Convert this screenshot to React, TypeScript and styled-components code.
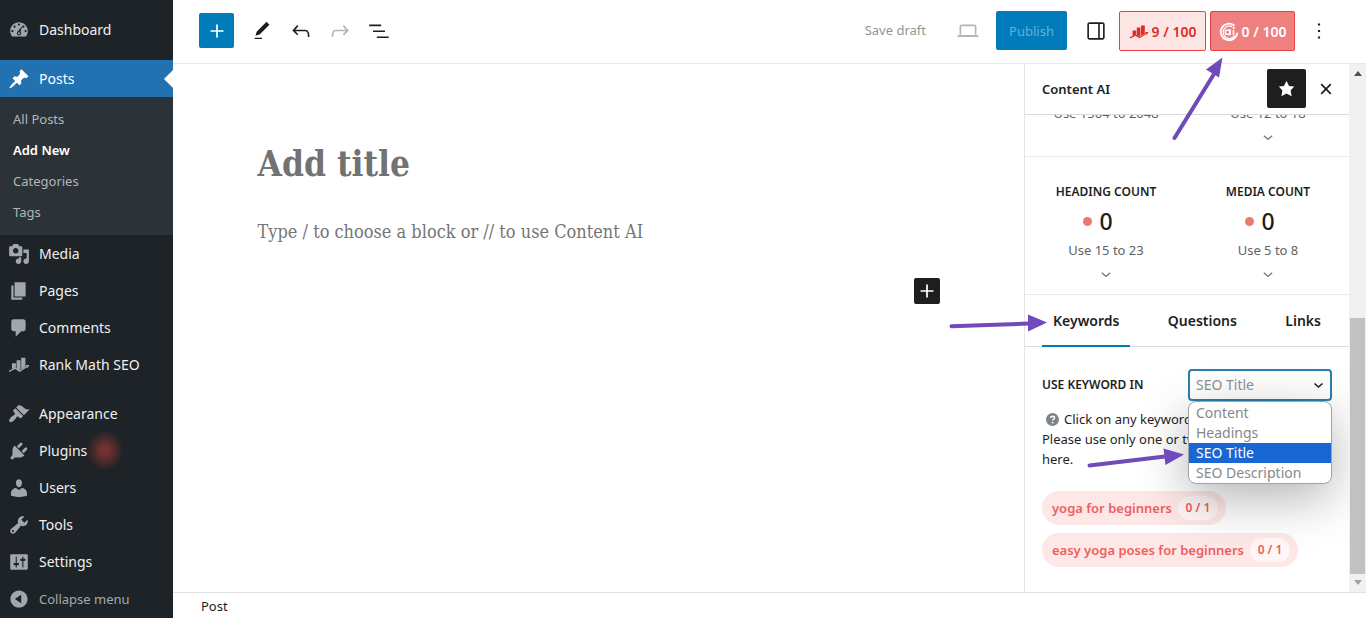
import React, { useState } from 'react';
import styled, { createGlobalStyle, css } from 'styled-components';

const sans = `'Noto Sans', 'Open Sans', sans-serif`;
const serif = `'DejaVu Serif Condensed', 'DejaVu Serif', serif`;
const blue = '#007cba';
const purple = '#7049ba';

const GlobalStyle = createGlobalStyle`
  *, *::before, *::after { box-sizing: border-box; }
  body { margin: 0; background: #fff; color: #1e1e1e; font: 14px/20px ${sans}; }
  button, select, input { font: inherit; color: inherit; }
  button { padding: 0; border: 0; background: none; cursor: pointer; }
  ul { margin: 0; padding: 0; list-style: none; }
  h1, h2, p { margin: 0; }
  a { color: inherit; text-decoration: none; }
`;

const Shell = styled.div`
  position: relative;
  display: flex;
  height: 100vh;
  min-height: 618px;
  overflow: hidden;
`;

/* ---------- admin menu ---------- */

const AdminMenu = styled.nav`
  flex: 0 0 173px;
  padding-top: 11px;
  background: #1d2327;
  color: #f0f0f1;
`;

const MenuLink = styled.a<{ $current?: boolean; $muted?: boolean }>`
  position: relative;
  display: flex;
  align-items: center;
  gap: 9px;
  height: 37px;
  padding-left: 8px;
  color: ${(p) => (p.$muted ? '#a7aaad' : 'inherit')};
  font-size: ${(p) => (p.$muted ? 13 : 14)}px;
  ${(p) =>
    p.$current &&
    css`
      background: #2271b1;
      color: #fff;
      &::after {
        content: '';
        position: absolute;
        right: 0;
        border: 9px solid transparent;
        border-left: 0;
        border-right-color: #fff;
      }
    `}
`;

const MenuIcon = styled.svg<{ $current?: boolean }>`
  width: 22px;
  height: 22px;
  fill: ${(p) => (p.$current ? '#fff' : '#a2a7ad')};
`;

const MenuSpacer = styled.li`
  height: 12px;
`;

const SubMenu = styled.ul`
  padding: 7px 0;
  background: #2c3338;
`;

const SubLink = styled.a<{ $current?: boolean }>`
  display: block;
  padding-left: 13px;
  font-size: 13px;
  line-height: 31px;
  color: ${(p) => (p.$current ? '#fff' : '#b2b5b8')};
  font-weight: ${(p) => (p.$current ? 600 : 400)};
`;

const UpdateGlow = styled.span`
  width: 34px;
  height: 37px;
  margin-left: -8px;
  background: radial-gradient(closest-side, #74312f 20%, #1d2327 110%);
`;

/* ---------- editor frame ---------- */

const Editor = styled.div`
  display: flex;
  flex: 1;
  flex-direction: column;
  min-width: 0;
`;

const TopBar = styled.header`
  display: flex;
  align-items: center;
  justify-content: space-between;
  flex: 0 0 64px;
  padding: 0 28px 2px 26px;
  border-bottom: 1px solid #e8e8e8;
`;

const ToolGroup = styled.div<{ $gap: number }>`
  display: flex;
  align-items: center;
  gap: ${(p) => p.$gap}px;
`;

const ToolButton = styled.button`
  display: grid;
  place-items: center;
  width: 39px;
  height: 39px;
  &:disabled { color: #b5b5b5; }
`;

const Glyph = styled.svg<{ $size?: number }>`
  width: ${(p) => p.$size ?? 26}px;
  height: ${(p) => p.$size ?? 26}px;
  fill: currentColor;
`;

const Inserter = styled.button<{ $dark?: boolean }>`
  display: grid;
  place-items: center;
  width: ${(p) => (p.$dark ? 26 : 35)}px;
  height: ${(p) => (p.$dark ? 26 : 35)}px;
  border-radius: 2px;
  background: ${(p) => (p.$dark ? '#1e1e1e' : blue)};
  color: #fff;
`;

const DraftButton = styled.button`
  padding: 0 13px;
  font-size: 13px;
  line-height: 39px;
  &:disabled { color: #949494; }
`;

const PublishButton = styled.button`
  width: 71px;
  height: 39px;
  border-radius: 2px;
  background: ${blue};
  font-size: 13px;
  &:disabled { color: #66b0d6; }
`;

const ScoreButton = styled.button<{ $solid?: boolean }>`
  display: flex;
  align-items: center;
  justify-content: center;
  gap: 3px;
  width: ${(p) => (p.$solid ? 85 : 87)}px;
  height: 40px;
  padding-top: 2px;
  border: 1px solid #e8403f;
  border-radius: 2px;
  background: ${(p) => (p.$solid ? '#ee8080' : '#fde5e3')};
  color: ${(p) => (p.$solid ? '#fff' : '#dd2c2a')};
  font-weight: 600;
`;

const Workspace = styled.div`
  display: flex;
  flex: 1;
  min-height: 0;
`;

const Canvas = styled.main`
  flex: 1;
  padding: 72px 84px 0;
`;

const Post = styled.article`
  display: flex;
  flex-direction: column;
  max-width: 682px;
  margin: 0 auto;
`;

const PostTitle = styled.h1`
  font: bold 35px/56px ${serif};
  color: #727272;
`;

const PostPrompt = styled.p`
  margin: 24px 0 30px;
  font: 18px/32px ${serif};
  color: #757575;
`;

const InserterRow = styled.div`
  display: flex;
  justify-content: flex-end;
`;

const Footer = styled.footer`
  flex: 0 0 26px;
  padding: 3px 28px;
  border-top: 1px solid #e0e0e0;
  font-size: 13px;
  margin-bottom: -1px;
`;

/* ---------- content AI panel ---------- */

const Panel = styled.aside`
  display: flex;
  flex-direction: column;
  flex: 0 0 325px;
  border-left: 1px solid #e4e4e4;
`;

const PanelHeader = styled.div`
  display: flex;
  align-items: center;
  flex: 0 0 51px;
  padding: 0 4px 1px 17px;
  border-bottom: 1px solid #dadada;
`;

const PanelTitle = styled.h2`
  flex: 1;
  font-size: 13px;
  line-height: 20px;
  font-weight: 600;
`;

const PinButton = styled(ToolButton)`
  border-radius: 2px;
  background: #1e1e1e;
  color: #fff;
`;

const PanelBody = styled.div`
  display: flex;
  flex: 1;
  flex-direction: column;
  justify-content: flex-end;
  min-height: 0;
  overflow: hidden;
`;

const StatRow = styled.div<{ $top: number; $bottom: number }>`
  display: grid;
  grid-template-columns: 1fr 1fr;
  flex: none;
  padding: ${(p) => p.$top}px 0 ${(p) => p.$bottom}px;
  border-bottom: 1px solid #e8e8e8;
`;

const Stat = styled.div`
  display: flex;
  flex-direction: column;
  align-items: center;
`;

const StatName = styled.div`
  font-size: 12px;
  font-weight: 600;
  line-height: 20px;
`;

const StatValue = styled.div`
  display: flex;
  align-items: center;
  gap: 7px;
  margin-right: 16px;
  font-size: 23px;
  font-weight: 500;
  line-height: 38px;
  &::before {
    content: '';
    width: 9px;
    height: 9px;
    border-radius: 50%;
    background: #f0776c;
  }
`;

const StatHint = styled.div`
  font-size: 13px;
  color: #5f6266;
`;

const StatToggle = styled.button`
  height: 24px;
  padding-top: 4px;
  color: #777;
  line-height: 0;
`;

const Tabs = styled.div`
  display: flex;
  justify-content: space-between;
  flex: none;
  padding: 0 17px;
  border-bottom: 1px solid #d8dadc;
`;

const Tab = styled.button<{ $active: boolean }>`
  height: 52px;
  margin-bottom: -1px;
  padding: 2px 11px 0;
  border-bottom: 2px solid ${(p) => (p.$active ? blue : 'transparent')};
  font-weight: 600;
`;

const KeywordPane = styled.div`
  flex: none;
  padding: 22px 17px 25px 17px;
`;

const FieldRow = styled.div`
  display: flex;
  align-items: center;
  justify-content: space-between;
`;

const FieldLabel = styled.label`
  font-size: 12px;
  font-weight: 600;
`;

const SelectBox = styled.div`
  position: relative;
  width: 144px;
`;

const Select = styled.select`
  display: block;
  width: 100%;
  height: 32px;
  padding: 0 6px;
  border: 2px solid #2a7fb0;
  border-radius: 4px;
  appearance: none;
  outline: 0;
  background: #fff;
  color: #8c9196;
`;

const SelectArrow = styled.svg`
  position: absolute;
  top: 11px;
  right: 8px;
  width: 11px;
  height: 11px;
  pointer-events: none;
`;

const OptionList = styled.ul`
  position: absolute;
  z-index: 1;
  top: 100%;
  right: 0;
  left: 0;
  overflow: hidden;
  padding-top: 1px;
  border: 1px solid #a3a3a3;
  border-radius: 8px;
  background: #fff;
  box-shadow: 0 14px 50px rgba(0, 0, 0, 0.3);
`;

const OptionItem = styled.li<{ $selected: boolean }>`
  padding-left: 7px;
  cursor: pointer;
  background: ${(p) => (p.$selected ? '#1967d2' : 'transparent')};
  color: ${(p) => (p.$selected ? '#fff' : '#85888c')};
`;

const HelpText = styled.p`
  margin: 8px 0 22px;
  font-size: 13px;
  white-space: nowrap;
`;

const HelpIcon = styled.svg`
  width: 13px;
  height: 13px;
  margin: 0 5px 0 4px;
  vertical-align: -2px;
`;

const Keywords = styled.ul`
  display: flex;
  flex-direction: column;
  align-items: flex-start;
  gap: 8px;
`;

const KeywordChip = styled.button`
  display: flex;
  align-items: center;
  gap: 6px;
  height: 34px;
  padding: 0 8px 0 10px;
  border-radius: 17px;
  background: #fde8e7;
  color: #ee5f5c;
  font-size: 13px;
  font-weight: 600;
`;

const KeywordCount = styled.span`
  width: 40px;
  border-radius: 12px;
  background: #fff6f5;
  font-size: 12px;
  line-height: 24px;
`;

const ScrollTrack = styled.div`
  display: flex;
  flex-direction: column;
  align-items: center;
  flex: 0 0 17px;
  padding: 6px 0;
  background: #f1f1f1;
`;

const ScrollThumb = styled.div`
  flex: 0 0 256px;
  width: 15px;
  margin: auto 0 5px;
  background: #c1c1c1;
`;

const ScrollArrow = styled.svg<{ $dim?: boolean }>`
  width: 8px;
  height: 7px;
  fill: ${(p) => (p.$dim ? '#a3a3a3' : '#505050')};
`;

/* ---------- callout arrows over the editor ---------- */

const Pointer = styled.svg<{ $top: number; $right: number }>`
  position: absolute;
  z-index: 2;
  top: ${(p) => p.$top}px;
  right: ${(p) => p.$right}px;
  fill: ${purple};
  stroke: ${purple};
  stroke-linecap: round;
  pointer-events: none;
`;

const paths = {
  dashboard:
    'M3.76 16h12.48c1.1-1.37 1.76-3.11 1.76-5 0-4.42-3.58-8-8-8s-8 3.58-8 8c0 1.89.66 3.63 1.76 5zM10 4c.55 0 1 .45 1 1s-.45 1-1 1-1-.45-1-1 .45-1 1-1zM6 6c.55 0 1 .45 1 1s-.45 1-1 1-1-.45-1-1 .45-1 1-1zm8 0c.55 0 1 .45 1 1s-.45 1-1 1-1-.45-1-1 .45-1 1-1zM13.4 5.8l-2.1 5.5c.43.43.7 1.04.7 1.7 0 1.1-.9 2-2 2s-2-.9-2-2c0-.57.24-1.08.63-1.45zM4 10c.55 0 1 .45 1 1s-.45 1-1 1-1-.45-1-1 .45-1 1-1zm12 0c.55 0 1 .45 1 1s-.45 1-1 1-1-.45-1-1 .45-1 1-1zm-5 3c0-.55-.45-1-1-1s-1 .45-1 1 .45 1 1 1 1-.45 1-1z',
  posts:
    'M10.44 3.02l1.82-1.82 6.36 6.35-1.83 1.82c-1.05-.68-2.48-.57-3.41.36l-.75.75c-.92.93-1.04 2.35-.35 3.41l-1.83 1.82-2.41-2.41-2.8 2.79c-.42.42-3.38 2.71-3.8 2.29s1.86-3.39 2.28-3.81l2.79-2.79L4.1 9.36l1.83-1.82c1.05.69 2.48.57 3.4-.36l.75-.75c.93-.92 1.05-2.35.36-3.41z',
  media:
    'M13 11V4c0-.55-.45-1-1-1h-1.67L9 1H5L3.67 3H2c-.55 0-1 .45-1 1v7c0 .55.45 1 1 1h10c.55 0 1-.45 1-1zM7 4.5c1.38 0 2.5 1.12 2.5 2.5S8.38 9.5 7 9.5 4.5 8.38 4.5 7 5.62 4.5 7 4.5zM14 6h5v10.5c0 1.38-1.12 2.5-2.5 2.5S14 17.88 14 16.5s1.12-2.5 2.5-2.5c.17 0 .34.02.5.05V9h-3V6zm-4 8.05V13h2v3.5c0 1.38-1.12 2.5-2.5 2.5S7 17.88 7 16.5 8.12 14 9.5 14c.17 0 .34.02.5.05z',
  pages: 'M6 15V2h10v13H6zm-1 1h8v2H3V5h2v11z',
  comments: 'M5 2h9c1.1 0 2 .9 2 2v7c0 1.1-.9 2-2 2h-2l-5 5v-5H5c-1.1 0-2-.9-2-2V4c0-1.1.9-2 2-2z',
  rankMath:
    'M3.6 8.4h3.6v4.2l-.8-.4-2.8 1.5zM7.8 5.6h3.6v8.5l-1 .6-2.6-1.6zM12 3.4h3.8v8.2L12 13.8zM.8 15.3l5.7-3 4 2.6 6.2-3.7-.6-1.1 3.3-.2-1.5 3-.6-.9-6.7 4.3-4.2-2.6-5.2 2.7z',
  appearance:
    'M14.48 11.06L7.41 3.99l1.5-1.5c.5-.56 2.3-.47 3.51.32 1.21.8 1.43 1.28 2.91 2.1 1.18.64 2.45 1.26 4.45.85zm-.71.71L6.7 4.7 4.93 6.47c-.39.39-.39 1.02 0 1.41l1.06 1.06c.39.39.39 1.03 0 1.42-.6.6-1.43 1.11-2.21 1.69-.35.26-.7.53-1.01.84C1.43 14.23.4 16.08 1.4 17.07c.99 1 2.84-.03 4.18-1.36.31-.31.58-.66.85-1.02.57-.78 1.08-1.61 1.69-2.21.39-.39 1.02-.39 1.41 0l1.06 1.06c.39.39 1.02.39 1.41 0z',
  plugins:
    'M13.11 4.36L9.87 7.6 8 5.73l3.24-3.24c.35-.34 1.05-.2 1.56.32.52.51.66 1.21.31 1.55zm-8 1.77l.91-1.12 9.01 9.01-1.19.84c-.71.71-2.63 1.16-3.82 1.16H6.14L4.9 17.26c-.59.59-1.54.59-2.12 0-.59-.58-.59-1.53 0-2.12l1.24-1.24v-3.88c0-1.13.4-3.19 1.09-3.89zm7.26 3.97l3.24-3.24c.34-.35 1.04-.21 1.55.31.52.51.66 1.21.31 1.55l-3.24 3.25z',
  users:
    'M10 9.25c-2.27 0-2.73-3.44-2.73-3.44C7 4.02 7.82 2 9.97 2c2.16 0 2.98 2.02 2.71 3.81 0 0-.41 3.44-2.68 3.44zm0 2.57L12.72 10c2.39 0 4.52 2.33 4.52 4.53v2.49s-3.65 1.13-7.24 1.13c-3.65 0-7.24-1.13-7.24-1.13v-2.49c0-2.25 1.94-4.48 4.47-4.48z',
  tools:
    'M16.68 9.77c-1.34 1.34-3.3 1.67-4.95.99l-5.41 6.52c-.99.99-2.59.99-3.58 0s-.99-2.59 0-3.57l6.52-5.42c-.68-1.65-.35-3.61.99-4.95 1.28-1.28 3.12-1.62 4.72-1.06l-2.89 2.89 2.82 2.82 2.86-2.87c.53 1.58.18 3.39-1.08 4.65zM3.81 16.21c.4.39 1.04.39 1.43 0 .4-.4.4-1.04 0-1.43-.39-.4-1.03-.4-1.43 0-.39.39-.39 1.03 0 1.43z',
  settings:
    'M18 16V4c0-.55-.45-1-1-1H3c-.55 0-1 .45-1 1v12c0 .55.45 1 1 1h14c.55 0 1-.45 1-1zM8 11h1c.55 0 1 .45 1 1s-.45 1-1 1H8v1.5c0 .28-.22.5-.5.5s-.5-.22-.5-.5V13H6c-.55 0-1-.45-1-1s.45-1 1-1h1V5.5c0-.28.22-.5.5-.5s.5.22.5.5V11zm5-2h-1c-.55 0-1-.45-1-1s.45-1 1-1h1V5.5c0-.28.22-.5.5-.5s.5.22.5.5V7h1c.55 0 1 .45 1 1s-.45 1-1 1h-1v5.5c0 .28-.22.5-.5.5s-.5-.22-.5-.5V9z',
  collapse:
    'M10 2.16c4.33 0 7.84 3.51 7.84 7.84s-3.51 7.84-7.84 7.84S2.16 14.33 2.16 10 5.71 2.16 10 2.16zm2 11.72V6.12L6.18 9.97z',
  star: 'M10 1l3 6 6 .75-4.12 4.62L16 19l-6-3-6 3 1.13-6.63L1 7.75 7 7z',
  plus: 'M18 11.2h-5.2V6h-1.6v5.2H6v1.6h5.2V18h1.6v-5.2H18z',
  pencil: 'M20.1 5.1L16.9 2 6.2 12.7l-1.3 4.4 4.5-1.3L20.1 5.1zM4 20.8h8v-1.5H4v1.5z',
  undo: 'M18.3 11.7c-.6-.6-1.4-.9-2.3-.9H6.7l2.9-3.3-1.1-1-4.5 5L8.5 16l1-1-2.7-2.7H16c.5 0 .9.2 1.3.5 1 1 1 3.4 1 4.5v.3h1.5v-.2c0-1.5 0-4.3-1.5-5.7z',
  redo: 'M15.6 6.5l-1.1 1 2.9 3.3H8c-.9 0-1.7.3-2.3.9-1.4 1.5-1.4 4.2-1.4 5.6v.2h1.5v-.3c0-1.1 0-3.5 1-4.5.3-.3.7-.5 1.3-.5h9.2L14.5 15l1.1 1.1 4.6-4.6-4.6-5z',
  outline: 'M3 6h11v1.5H3V6Zm3.5 5.5h11V13h-11v-1.5ZM21 17H10v1.5h11V17Z',
  laptop:
    'M20.5 16h-.7V8c0-1.1-.9-2-2-2H6.2c-1.1 0-2 .9-2 2v8h-.7c-.8 0-1.5.7-1.5 1.5h20c0-.8-.7-1.5-1.5-1.5zM5.7 8c0-.3.2-.5.5-.5h11.6c.3 0 .5.2.5.5v7.6H5.7V8z',
  sidebar:
    'M18 4H6c-1.1 0-2 .9-2 2v12c0 1.1.9 2 2 2h12c1.1 0 2-.9 2-2V6c0-1.1-.9-2-2-2zm-4 14.5H6c-.3 0-.5-.2-.5-.5V6c0-.3.2-.5.5-.5h8v13zm4.5-.5c0 .3-.2.5-.5.5h-2.5v-13H18c.3 0 .5.2.5.5v12z',
  more: 'M13 19h-2v-2h2v2zm0-6h-2v-2h2v2zm0-6h-2V5h2v2z',
  close:
    'M12 10.4L6.4 4.8 4.8 6.4l5.6 5.6-5.6 5.6 1.6 1.6L12 13.6l5.6 5.6 1.6-1.6-5.6-5.6 5.6-5.6-1.6-1.6z',
  chevron: 'M17.5 11L12 16l-5.5-5 1-1.2L12 13.8l4.500-4 1 1.200z',
};

type IconName = keyof typeof paths;

const Icon = ({ name, size, box = 24 }: { name: IconName; size?: number; box?: number }) => (
  <Glyph $size={size} viewBox={`0 0 ${box} ${box}`} fillRule="evenodd" aria-hidden="true">
    <path d={paths[name]} />
  </Glyph>
);

const ContentAiMark = () => (
  <Glyph $size={20} viewBox="0 0 20 20" aria-hidden="true">
    <g fill="none" stroke="currentColor" strokeLinecap="round">
      <path d="M15 3.2A8.3 8.3 0 1 0 18.2 11.5" strokeWidth="1.8" />
      <path d="M12.8 4.5A6.2 6.2 0 1 0 14.4 15c1.6 0 3.2-.8 3.8-3" strokeWidth="1.4" />
      <circle cx="8.600" cy="10.2" r="2.3" strokeWidth="1.5" />
      <path d="M11.2 7.8v5M14.5 8.6v4.2" strokeWidth="1.5" />
    </g>
    <circle cx="14.7" cy="5.9" r="1.1" />
  </Glyph>
);

interface MenuEntry {
  label: string;
  icon: IconName;
  current?: boolean;
  muted?: boolean;
  glow?: boolean;
  spaceBefore?: boolean;
}

const menu: MenuEntry[] = [
  { label: 'Dashboard', icon: 'dashboard' },
  { label: 'Posts', icon: 'posts', current: true, spaceBefore: true },
  { label: 'Media', icon: 'media' },
  { label: 'Pages', icon: 'pages' },
  { label: 'Comments', icon: 'comments' },
  { label: 'Rank Math SEO', icon: 'rankMath' },
  { label: 'Appearance', icon: 'appearance', spaceBefore: true },
  { label: 'Plugins', icon: 'plugins', glow: true },
  { label: 'Users', icon: 'users' },
  { label: 'Tools', icon: 'tools' },
  { label: 'Settings', icon: 'settings' },
  { label: 'Collapse menu', icon: 'collapse', muted: true },
];

const postLinks = ['All Posts', 'Add New', 'Categories', 'Tags'];
const tabs = ['Keywords', 'Questions', 'Links'];
const targets = ['Content', 'Headings', 'SEO Title', 'SEO Description'];
const keywords = ['yoga for beginners', 'easy yoga poses for beginners'];

const ExpandButton = () => (
  <StatToggle aria-label="Show details">
    <Icon name="chevron" size={20} />
  </StatToggle>
);

export default function App() {
  const [tab, setTab] = useState('Keywords');
  const [target, setTarget] = useState('SEO Title');

  return (
    <>
      <GlobalStyle />
      <Shell>
        <AdminMenu aria-label="Main menu">
          <ul>
            {menu.map((m) => (
              <React.Fragment key={m.label}>
                {m.spaceBefore && <MenuSpacer role="presentation" />}
                <li>
                  <MenuLink href="#" $current={m.current} $muted={m.muted}>
                    <MenuIcon viewBox="0 0 20 20" fillRule="evenodd" $current={m.current} aria-hidden="true">
                      <path d={paths[m.icon]} />
                    </MenuIcon>
                    {m.label}
                    {m.glow && <UpdateGlow />}
                  </MenuLink>
                  {m.current && (
                    <SubMenu>
                      {postLinks.map((l) => (
                        <li key={l}>
                          <SubLink href="#" $current={l === 'Add New'}>{l}</SubLink>
                        </li>
                      ))}
                    </SubMenu>
                  )}
                </li>
              </React.Fragment>
            ))}
          </ul>
        </AdminMenu>

        <Editor>
          <TopBar>
            <ToolGroup $gap={8}>
              <Inserter aria-label="Add block"><Icon name="plus" /></Inserter>
              <ToolGroup $gap={0}>
                <ToolButton aria-label="Tools"><Icon name="pencil" size={22} /></ToolButton>
                <ToolButton aria-label="Undo"><Icon name="undo" /></ToolButton>
                <ToolButton aria-label="Redo" disabled><Icon name="redo" /></ToolButton>
                <ToolButton aria-label="Document overview"><Icon name="outline" /></ToolButton>
              </ToolGroup>
            </ToolGroup>
            <ToolGroup $gap={9}>
              <DraftButton disabled>Save draft</DraftButton>
              <ToolButton aria-label="Preview" disabled><Icon name="laptop" /></ToolButton>
              <PublishButton disabled>Publish</PublishButton>
              <ToolGroup $gap={4}>
                <ToolButton aria-label="Settings"><Icon name="sidebar" /></ToolButton>
                <ScoreButton><Icon name="rankMath" size={20} box={20} />9 / 100</ScoreButton>
                <ScoreButton $solid><ContentAiMark />0 / 100</ScoreButton>
                <ToolButton aria-label="Options"><Icon name="more" /></ToolButton>
              </ToolGroup>
            </ToolGroup>
          </TopBar>

          <Workspace>
            <Canvas>
              <Post>
                <PostTitle>Add title</PostTitle>
                <PostPrompt>Type / to choose a block or // to use Content AI</PostPrompt>
                <InserterRow>
                  <Inserter $dark aria-label="Add block"><Icon name="plus" /></Inserter>
                </InserterRow>
              </Post>
            </Canvas>

            <Panel>
              <PanelHeader>
                <PanelTitle>Content AI</PanelTitle>
                <PinButton aria-label="Unpin from toolbar"><Icon name="star" size={17} box={20} /></PinButton>
                <ToolButton aria-label="Close panel"><Icon name="close" size={18} /></ToolButton>
              </PanelHeader>
              <PanelBody>
                <StatRow $top={0} $bottom={9}>
                  <Stat><StatHint>Use 1504 to 2048</StatHint></Stat>
                  <Stat><StatHint>Use 12 to 18</StatHint><ExpandButton /></Stat>
                </StatRow>
                <StatRow $top={25} $bottom={10}>
                  {[['Heading Count', 'Use 15 to 23'], ['Media Count', 'Use 5 to 8']].map(([name, hint]) => (
                    <Stat key={name}>
                      <StatName>{name.toUpperCase()}</StatName>
                      <StatValue>0</StatValue>
                      <StatHint>{hint}</StatHint>
                      <ExpandButton />
                    </Stat>
                  ))}
                </StatRow>
                <Tabs role="tablist">
                  {tabs.map((t) => (
                    <Tab key={t} role="tab" aria-selected={t === tab} $active={t === tab} onClick={() => setTab(t)}>
                      {t}
                    </Tab>
                  ))}
                </Tabs>
                <KeywordPane>
                  <FieldRow>
                    <FieldLabel htmlFor="target">USE KEYWORD IN</FieldLabel>
                    <SelectBox>
                      <Select id="target" value={target} onChange={(e) => setTarget(e.target.value)}>
                        {targets.map((t) => <option key={t}>{t}</option>)}
                      </Select>
                      <SelectArrow viewBox="0 0 11 11" fill="none" stroke="#1e1e1e" strokeWidth="1.6">
                        <path d="M1.5 3.5l4 3.5 4-3.5" />
                      </SelectArrow>
                      <OptionList role="listbox" aria-label="Use keyword in">
                        {targets.map((t) => (
                          <OptionItem
                            key={t}
                            role="option"
                            aria-selected={t === target}
                            $selected={t === target}
                            onClick={() => setTarget(t)}
                          >
                            {t}
                          </OptionItem>
                        ))}
                      </OptionList>
                    </SelectBox>
                  </FieldRow>
                  <HelpText>
                    <HelpIcon viewBox="0 0 14 14" aria-hidden="true">
                      <circle cx="7" cy="7" r="7" fill="#7c838a" />
                      <path d="M5 5.4c0-2.7 4.2-2.6 4.2-.2C9.2 6.7 7.2 6.7 7.2 8.2" fill="none" stroke="#fff" strokeWidth="1.6" />
                      <circle cx="7.2" cy="10.3" r="1" fill="#fff" />
                    </HelpIcon>
                    Click on any keyword to copy it.<br />
                    Please use only one or two keywords<br />
                    here.
                  </HelpText>
                  <Keywords>
                    {keywords.map((k) => (
                      <li key={k}>
                        <KeywordChip>{k} <KeywordCount>0 / 1</KeywordCount></KeywordChip>
                      </li>
                    ))}
                  </Keywords>
                </KeywordPane>
              </PanelBody>
            </Panel>

            <ScrollTrack>
              <ScrollArrow viewBox="0 0 8 7"><path d="M4 1l4 5H0z" /></ScrollArrow>
              <ScrollThumb />
              <ScrollArrow $dim viewBox="0 0 8 7"><path d="M4 6l4-5H0z" /></ScrollArrow>
            </ScrollTrack>
          </Workspace>

          <Footer>Post</Footer>
        </Editor>

        <Pointer $top={57} $right={142} width="52" height="84" viewBox="0 0 52 84">
          <path d="M2.5 81L42 17" strokeWidth="4" />
          <path d="M50.5.5L34 12.5l13 8z" stroke="none" />
        </Pointer>
        <Pointer $top={314} $right={319} width="98" height="18" viewBox="0 0 98 18">
          <path d="M2.5 12.2L80 9.5" strokeWidth="4" />
          <path d="M98 8.5L79 .5v17z" stroke="none" />
        </Pointer>
        <Pointer $top={447} $right={182} width="97" height="21" viewBox="0 0 97 21">
          <path d="M2.5 18.5L78 9.5" strokeWidth="4" />
          <path d="M97 7.5L76.5 1.5l2 16.5z" stroke="none" />
        </Pointer>
      </Shell>
    </>
  );
}
